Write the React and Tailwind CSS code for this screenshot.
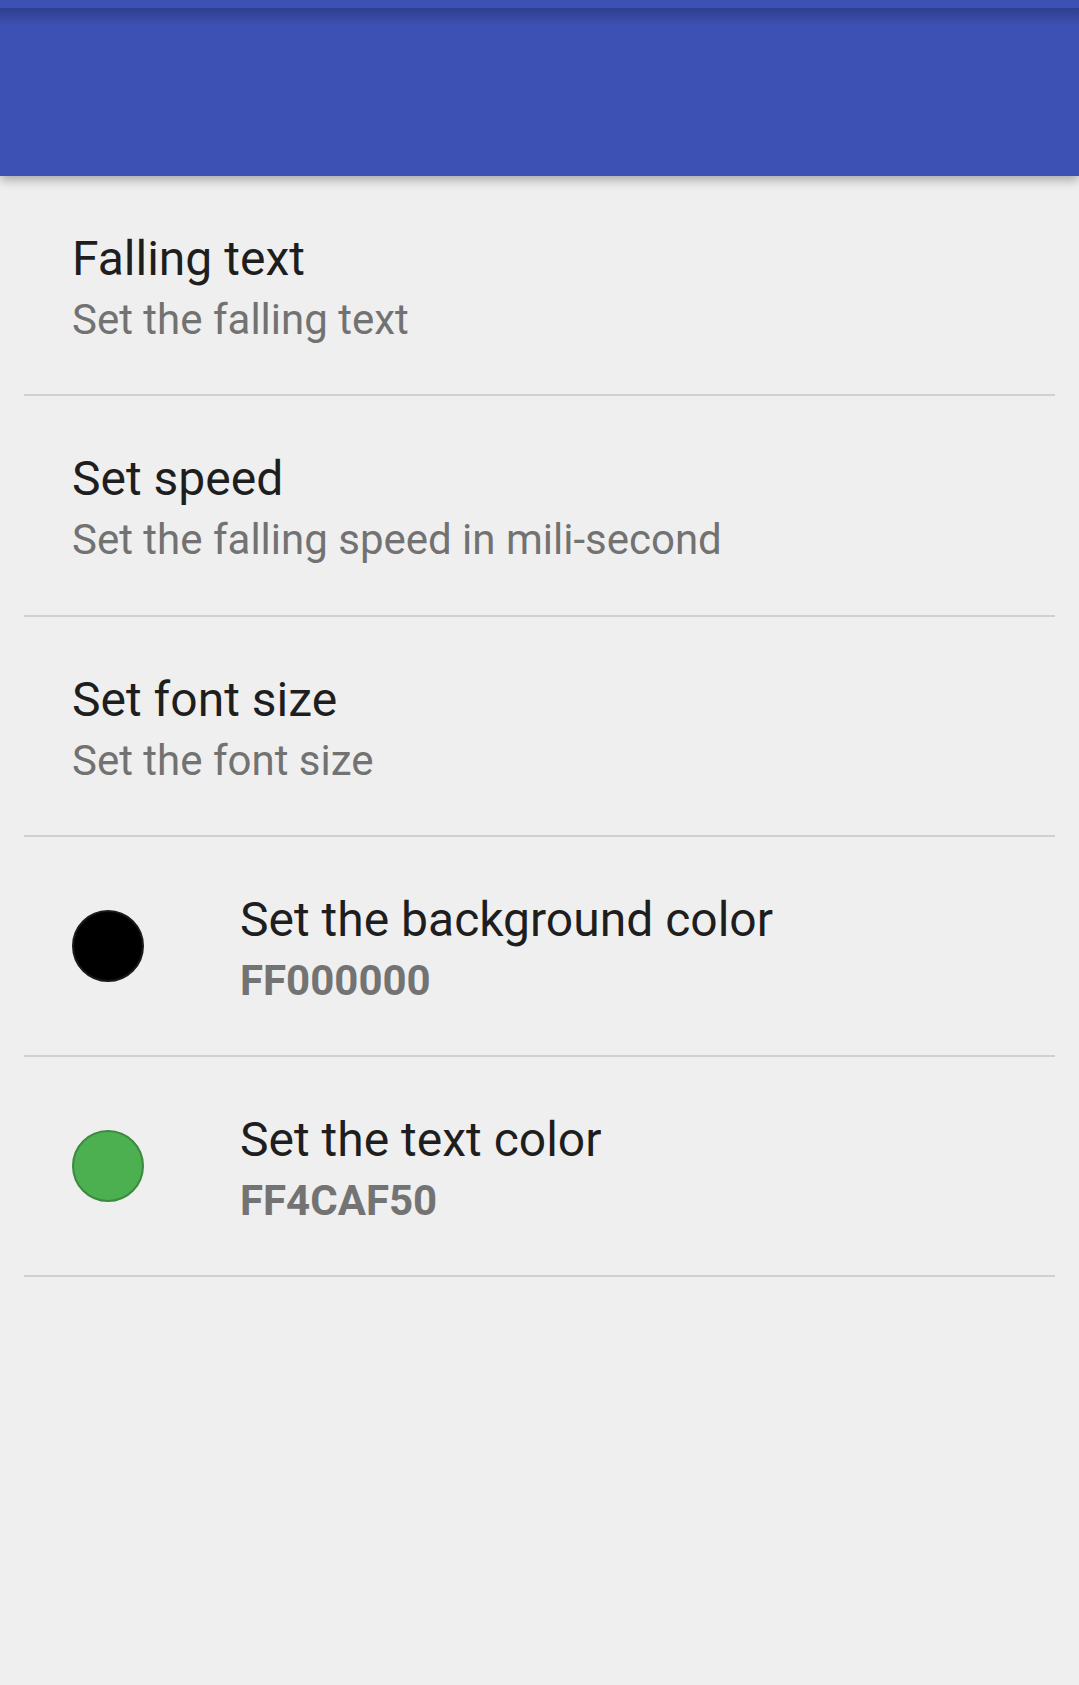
import React from "react";

const items = [
  { title: "Falling text", summary: "Set the falling text" },
  { title: "Set speed", summary: "Set the falling speed in mili-second" },
  { title: "Set font size", summary: "Set the font size" },
  { title: "Set the background color", code: "FF000000", swatch: "bg-black border-[#1a1a1a]" },
  { title: "Set the text color", code: "FF4CAF50", swatch: "bg-[#4caf50] border-[#3b8a3f]" },
];

function PrefRow({ item }) {
  return (
    <div>
      <div className="h-[218.3px] flex items-start pl-[72px] pr-6">
        {item.swatch && (
          <div className="w-[168px] h-full flex items-center shrink-0">
            <div className={`w-[72px] h-[72px] rounded-full border-2 ${item.swatch}`} />
          </div>
        )}
        <div className="pt-[55px]">
          <div className="text-[48px] leading-[56px] text-[#1e1e1e]">{item.title}</div>
          {item.summary ? (
            <div className="mt-[8px] text-[42px] leading-[50px] text-[#727272]">{item.summary}</div>
          ) : (
            <div className="mt-[8px] text-[42px] leading-[50px] font-bold text-[#737373]">{item.code}</div>
          )}
        </div>
      </div>
      <div className="mx-6 h-[2px] bg-[#d0d0d0]" />
    </div>
  );
}

export default function App() {
  return (
    <div className="min-h-[1685px] bg-[#efefef]" style={{ fontFamily: "Roboto, 'Noto Sans', sans-serif" }}>
      <div className="relative h-[176px] bg-[#3d51b4] z-10 shadow-[0_4px_10px_rgba(0,0,0,0.3)]">
        <div className="h-2 bg-[#3d51b4]" />
        <div className="h-[18px] bg-gradient-to-b from-[#2f3f8e] to-[#3d51b4]" />
      </div>
      {items.map((item) => (
        <PrefRow key={item.title} item={item} />
      ))}
    </div>
  );
}
